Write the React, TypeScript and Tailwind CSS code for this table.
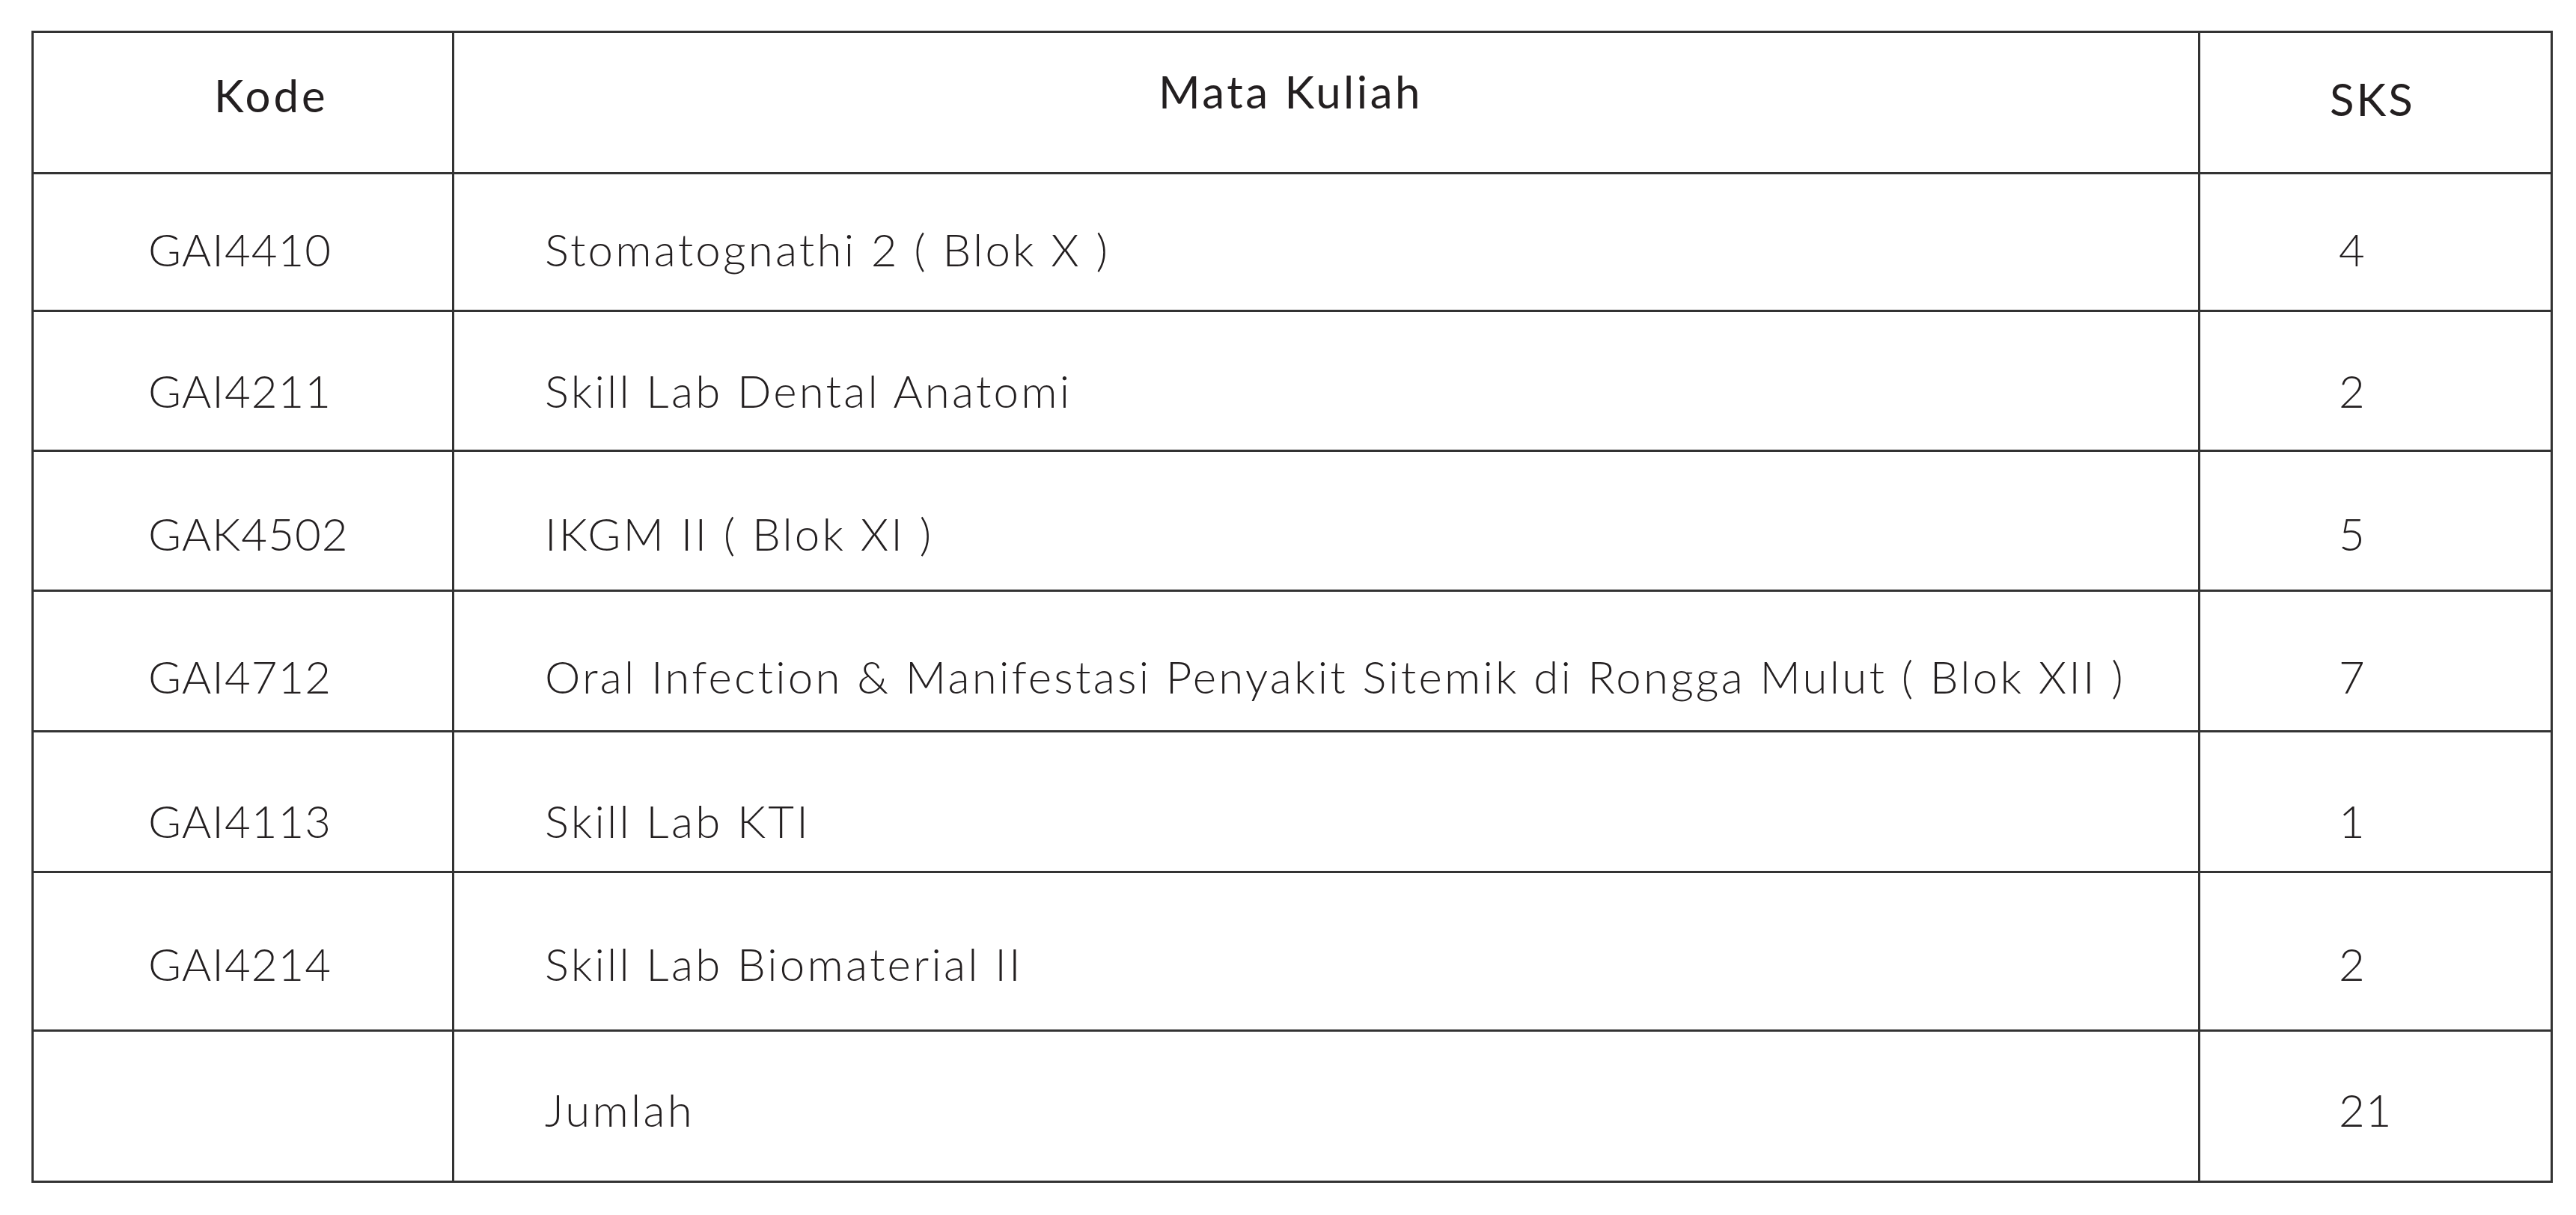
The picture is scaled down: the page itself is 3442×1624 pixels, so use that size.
const rows = [
  { kode: 'GAI4410', mk: 'Stomatognathi 2 ( Blok X )', sks: '4', h: 'h-[184px]', pt: 'pt-[70px]' },
  { kode: 'GAI4211', mk: 'Skill Lab Dental Anatomi', sks: '2', h: 'h-[187px]', pt: 'pt-[75px]' },
  { kode: 'GAK4502', mk: 'IKGM II ( Blok XI )', sks: '5', h: 'h-[187px]', pt: 'pt-[79px]' },
  { kode: 'GAI4712', mk: 'Oral Infection & Manifestasi Penyakit Sitemik di Rongga Mulut ( Blok XII )', sks: '7', h: 'h-[188px]', pt: 'pt-[83px]' },
  { kode: 'GAI4113', mk: 'Skill Lab KTI', sks: '1', h: 'h-[188px]', pt: 'pt-[88px]' },
  { kode: 'GAI4214', mk: 'Skill Lab Biomaterial II', sks: '2', h: 'h-[212px]', pt: 'pt-[91px]' },
  { kode: '', mk: 'Jumlah', sks: '21', h: 'h-[202px]', pt: 'pt-[74px]' },
];

export default function App() {
  return (
    <div className="min-h-screen w-full bg-white pl-[42px] pt-[41px] text-[#231f20] font-['Lato',sans-serif]">
      <table className="w-[3366px] table-fixed border-collapse">
        <colgroup>
          <col className="w-[562px]" />
          <col className="w-[2333px]" />
          <col className="w-[471px]" />
        </colgroup>
        <thead>
          <tr className="h-[189px]">
            <th className="border-[3px] border-[#333] p-0 pl-[241px] pt-[53px] text-left align-top text-[60px] leading-none font-normal tracking-[4px]">
              Kode
            </th>
            <th className="border-[3px] border-[#333] p-0 pl-[941px] pt-[48px] text-left align-top text-[60px] leading-none font-normal tracking-[3.5px]">
              Mata Kuliah
            </th>
            <th className="border-[3px] border-[#333] p-0 pl-[173px] pt-[58px] text-left align-top text-[60px] leading-none font-normal tracking-[3px]">
              SKS
            </th>
          </tr>
        </thead>
        <tbody>
          {rows.map((r, i) => (
            <tr key={i} className={r.h}>
              <td className={`border-[3px] border-[#333] p-0 pl-[153px] align-top text-[60px] leading-none font-light tracking-[1px] ${r.pt}`}>
                {r.kode}
              </td>
              <td className={`border-[3px] border-[#333] p-0 pl-[121px] align-top text-[60px] leading-none font-light tracking-[3.2px] ${r.pt}`}>
                {r.mk}
              </td>
              <td className={`border-[3px] border-[#333] p-0 pl-[185px] align-top text-[60px] leading-none font-light tracking-[1px] ${r.pt}`}>
                {r.sks}
              </td>
            </tr>
          ))}
        </tbody>
      </table>
    </div>
  );
}
